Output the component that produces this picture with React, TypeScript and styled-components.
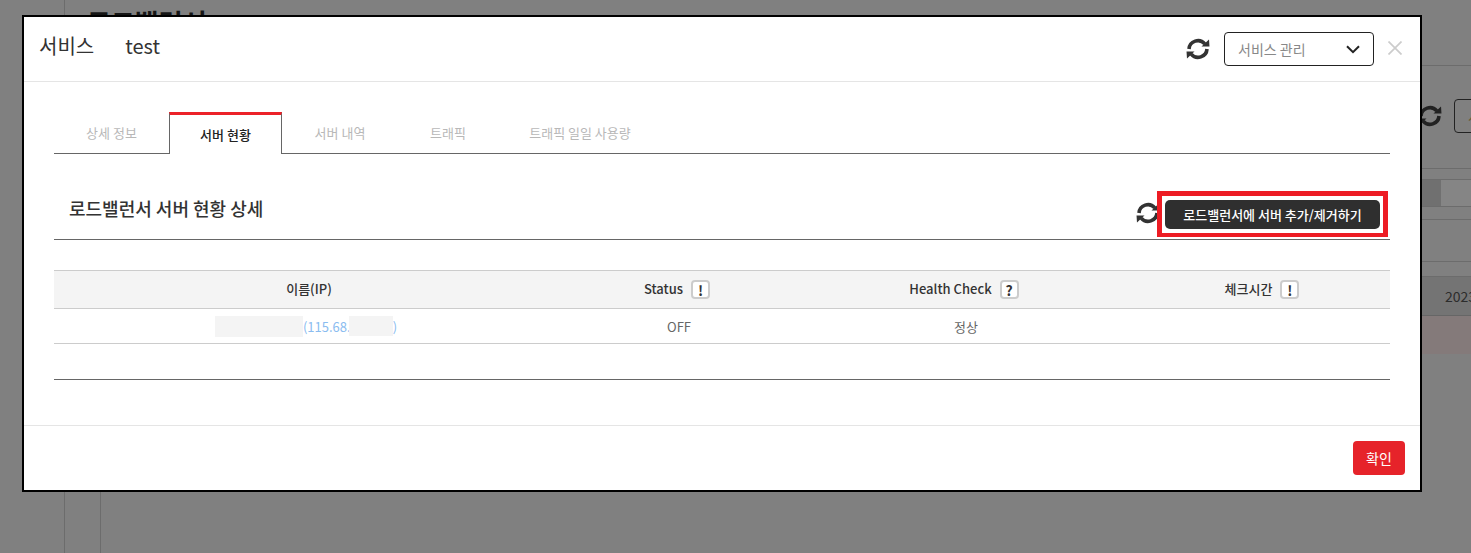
import React from "react";
import styled, { createGlobalStyle } from "styled-components";

const GlobalStyle = createGlobalStyle`
  html, body {
    margin: 0;
    padding: 0;
    height: 553px;
    overflow: hidden;
    background: #808080;
    font-family: "Noto Sans CJK KR", "Noto Sans", sans-serif;
  }
  * {
    box-sizing: border-box;
  }
`;

const RefreshIcon: React.FunctionComponent<{ size: number; color?: string }> = ({
  size,
  color = "#333",
}) => (
  <svg width={size} height={size} viewBox="0 0 24 24" fill="none" style={{ flexShrink: 0 }}>
    <path d="M18.8 6.8A9 9 0 0 0 3 12" stroke={color} strokeWidth="3.6" />
    <path d="M5.2 17.2A9 9 0 0 0 21 12" stroke={color} strokeWidth="3.6" />
    <path d="M15.5 9.5H23.5L23 2.5Z" fill={color} />
    <path d="M8.5 14.5H.5L1 21.5Z" fill={color} />
  </svg>
);

const tabs = [
  { label: "상세 정보", width: 115 },
  { label: "서버 현황", width: 113 },
  { label: "서버 내역", width: 116 },
  { label: "트래픽", width: 100 },
  { label: "트래픽 일일 사용량", width: 164 },
];

const App: React.FunctionComponent = () => {
  return (
    <>
      <GlobalStyle />
      <Page>
        <Rail />
        <Main>
          <PageHeading>
            <h1>로드밸런서</h1>
          </PageHeading>
          <PageBody>
            <SubRail />
            <Content>
              <PageToolbar>
                <RefreshIcon size={24} color="#222" />
                <GhostButton>서비스</GhostButton>
              </PageToolbar>
              <FilterBand>
                <FilterLabel />
                <FilterInput />
              </FilterBand>
              <Band $height={13} />
              <Band $height={42} />
              <Band $height={15} />
              <DataRow>2023-05-11</DataRow>
              <AlertRow />
            </Content>
          </PageBody>
        </Main>
      </Page>

      <Modal>
        <ModalHeader>
          <ModalTitle>
            <span>서비스</span>
            <span>test</span>
          </ModalTitle>
          <HeaderActions>
            <RefreshIcon size={24} />
            <Select>
              서비스 관리
              <svg width="14" height="9" viewBox="0 0 14 9" fill="none">
                <path d="M1 1.2 7 7.2 13 1.2" stroke="#222" strokeWidth="2" />
              </svg>
            </Select>
            <CloseButton>
              <svg width="14" height="14" viewBox="0 0 14 14" fill="none">
                <path d="M.5.5 13.5 13.5M13.5.5.5 13.5" stroke="#ccc" strokeWidth="1.7" />
              </svg>
            </CloseButton>
          </HeaderActions>
        </ModalHeader>

        <ModalBody>
          <Tabs>
            {tabs.map((item, index) => (
              <Tab key={index} $active={index === 1} $width={item.width}>
                {item.label}
              </Tab>
            ))}
          </Tabs>

          <SectionHead>
            <SectionTitle>로드밸런서 서버 현황 상세</SectionTitle>
            <SectionActions>
              <RefreshIcon size={24} />
              <DarkButton>로드밸런서에 서버 추가/제거하기</DarkButton>
            </SectionActions>
          </SectionHead>

          <Table>
            <HeadRow>
              <HeadCell>이름(IP)</HeadCell>
              <HeadCell>
                Status<HelpBox>!</HelpBox>
              </HeadCell>
              <HeadCell>
                Health Check<HelpBox>?</HelpBox>
              </HeadCell>
              <HeadCell>
                체크시간<HelpBox>!</HelpBox>
              </HeadCell>
            </HeadRow>
            <BodyRow>
              <BodyCell>
                <NameLink>
                  <Redacted $width={88} $height={21} />
                  (115.68.
                  <ClippedRedacted $width={44} $height={20} />)
                </NameLink>
              </BodyCell>
              <BodyCell>OFF</BodyCell>
              <BodyCell>정상</BodyCell>
              <BodyCell />
            </BodyRow>
            <EmptyRow />
          </Table>
        </ModalBody>

        <ModalFooter>
          <ConfirmButton>확인</ConfirmButton>
        </ModalFooter>
      </Modal>
    </>
  );
};

export default App;

const Page = styled.div`
  display: flex;
  width: 1471px;
  height: 553px;
  overflow: hidden;
  background: #808080;
`;

const Rail = styled.div`
  flex: 0 0 65px;
  border-right: 1px solid #6c6c6c;
`;

const Main = styled.div`
  flex: 1;
  min-width: 0;
  display: flex;
  flex-direction: column;
`;

const PageHeading = styled.div`
  flex: 0 0 66px;
  padding: 3px 0 0 22px;
  border-bottom: 1px solid #6c6c6c;

  h1 {
    margin: 0;
    font-size: 26px;
    line-height: 38px;
    font-weight: 700;
    color: #151515;
  }
`;

const PageBody = styled.div`
  flex: 1;
  display: flex;
`;

const SubRail = styled.div`
  flex: 0 0 36px;
  border-right: 1px solid #6c6c6c;
`;

const Content = styled.div`
  flex: 1;
  min-width: 0;
  display: flex;
  flex-direction: column;
`;

const PageToolbar = styled.div`
  flex: 0 0 103px;
  display: flex;
  align-items: center;
  gap: 12px;
  padding: 0 0 2px 1317px;
  border-bottom: 1px solid #6c6c6c;
`;

const GhostButton = styled.div`
  flex: 0 0 150px;
  height: 34px;
  padding-left: 13px;
  border: 1px solid #222;
  border-radius: 4px;
  color: #6a5a30;
  font-size: 14px;
  line-height: 32px;
`;

const FilterBand = styled.div`
  flex: 0 0 38px;
  display: flex;
  padding-top: 10px;
  border-bottom: 1px solid #6c6c6c;
`;

const FilterLabel = styled.div`
  flex: 0 0 1340px;
  background: #707070;
  border-top: 1px solid #6c6c6c;
`;

const FilterInput = styled.div`
  flex: 1;
  background: #858585;
  border-top: 1px solid #6c6c6c;
`;

const Band = styled.div<{ $height: number }>`
  flex: 0 0 ${(props) => props.$height}px;
  border-bottom: 1px solid #6c6c6c;
`;

const DataRow = styled.div`
  flex: 0 0 39px;
  padding-left: 1344px;
  background: #747474;
  border-bottom: 1px solid #666;
  color: #2c2c2c;
  font-size: 14px;
  line-height: 38px;
  white-space: nowrap;
`;

const AlertRow = styled.div`
  flex: 0 0 38px;
  background: #847a7a;
`;

const Modal = styled.div`
  position: absolute;
  left: 22px;
  top: 15px;
  width: 1400px;
  height: 477px;
  display: flex;
  flex-direction: column;
  background: #fff;
  border: 2px solid #000;
`;

const ModalHeader = styled.div`
  flex: 0 0 65px;
  display: flex;
  align-items: center;
  justify-content: space-between;
  padding: 0 16px 0 15px;
  border-bottom: 1px solid #e5e5e5;
`;

const ModalTitle = styled.div`
  display: flex;
  gap: 31px;
  font-size: 20px;
  line-height: 30px;
  color: #333;
  padding-bottom: 6px;
`;

const HeaderActions = styled.div`
  display: flex;
  align-items: center;
`;

const Select = styled.div`
  width: 150px;
  height: 34px;
  margin-left: 14px;
  padding: 0 13px;
  display: flex;
  align-items: center;
  justify-content: space-between;
  border: 1px solid #222;
  border-radius: 4px;
  color: #888;
  font-size: 14px;
`;

const CloseButton = styled.div`
  width: 30px;
  display: flex;
  justify-content: flex-end;
  padding: 0 2px 3px 0;
`;

const ModalBody = styled.div`
  flex: 1;
  padding: 30px 30px 0;
`;

const Tabs = styled.div`
  height: 42px;
  display: flex;
  border-bottom: 1px solid #666;
`;

const Tab = styled.div<{ $active?: boolean; $width: number }>`
  width: ${(props) => props.$width}px;
  height: ${(props) => (props.$active ? "42px" : "41px")};
  display: flex;
  align-items: center;
  justify-content: center;
  font-size: 13px;
  font-weight: ${(props) => (props.$active ? 500 : 400)};
  color: ${(props) => (props.$active ? "#222" : "#b8b8b8")};
  background: #fff;
  border-top: ${(props) => (props.$active ? "3px solid #ec2229" : "none")};
  border-left: ${(props) => (props.$active ? "1px solid #666" : "none")};
  border-right: ${(props) => (props.$active ? "1px solid #666" : "none")};
`;

const SectionHead = styled.div`
  height: 86px;
  display: flex;
  justify-content: space-between;
  padding: 44px 10px 0 15px;
  border-bottom: 1px solid #666;
`;

const SectionTitle = styled.h2`
  margin: 0;
  font-size: 18px;
  line-height: 20px;
  font-weight: 500;
  color: #333;
`;

const SectionActions = styled.div`
  display: flex;
  align-items: flex-start;
  gap: 5px;
  margin-top: 3px;
`;

const DarkButton = styled.div`
  position: relative;
  width: 215px;
  height: 29px;
  margin-top: -1px;
  display: flex;
  align-items: center;
  justify-content: center;
  border-radius: 5px;
  background: #2f2f2f;
  color: #fff;
  font-size: 13px;
  font-weight: 500;

  &::after {
    content: "";
    position: absolute;
    left: -8px;
    top: -9px;
    right: -8px;
    bottom: -8px;
    border: 5px solid #ed1c24;
    border-bottom-width: 4px;
  }
`;

const Table = styled.div`
  margin-top: 30px;
  border-top: 1px solid #ccc;
  border-bottom: 1px solid #666;
`;

const HeadRow = styled.div`
  height: 38px;
  display: grid;
  grid-template-columns: 510px 230px 344px 252px;
  background: #f4f4f4;
  border-bottom: 1px solid #ccc;
`;

const HeadCell = styled.div`
  display: flex;
  align-items: center;
  justify-content: center;
  gap: 8px;
  padding: 0 4px 2px 0;
  font-size: 13px;
  font-weight: 500;
  color: #333;

  &:first-child {
    padding-right: 0;
  }
`;

const HelpBox = styled.span`
  width: 19px;
  height: 19px;
  display: inline-flex;
  align-items: center;
  justify-content: center;
  margin-top: 2px;
  background: #fff;
  border: 2px solid #ccc;
  border-radius: 4px;
  font-size: 14px;
  font-weight: 700;
  line-height: 1;
  color: #333;
`;

const BodyRow = styled.div`
  height: 35px;
  display: grid;
  grid-template-columns: 510px 230px 344px 252px;
  border-bottom: 1px solid #ccc;
`;

const BodyCell = styled.div`
  display: flex;
  align-items: center;
  justify-content: center;
  font-size: 13px;
  color: #666;
`;

const NameLink = styled.span`
  display: flex;
  align-items: center;
  padding-right: 6px;
  color: #8abcf0;
`;

const Redacted = styled.span<{ $width: number; $height: number }>`
  display: inline-block;
  width: ${(props) => props.$width}px;
  height: ${(props) => props.$height}px;
  background: #f4f4f4;
`;

const ClippedRedacted = styled(Redacted)`
  margin-left: -2px;
`;

const EmptyRow = styled.div`
  height: 35px;
`;

const ModalFooter = styled.div`
  flex: 0 0 65px;
  display: flex;
  align-items: flex-start;
  justify-content: flex-end;
  padding: 15px 15px 0 0;
  border-top: 1px solid #e5e5e5;
`;

const ConfirmButton = styled.div`
  width: 52px;
  height: 34px;
  display: flex;
  align-items: center;
  justify-content: center;
  border-radius: 4px;
  background: #e6232a;
  color: #fff;
  font-size: 14px;
`;
